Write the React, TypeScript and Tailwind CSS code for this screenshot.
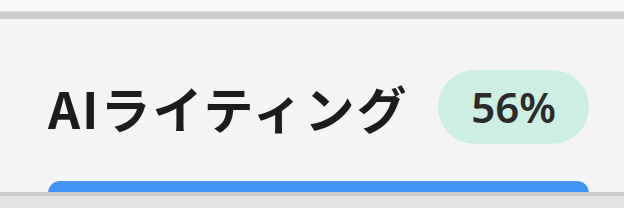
import React from "react";

export default function App() {
  return (
    <div className="w-[624px] h-[208px] bg-[#f9f9f9] flex flex-col overflow-hidden">
      <div className="h-[11px] shrink-0" />
      <div className="h-px bg-[#e0e0e0] shrink-0" />
      <div className="h-[7px] bg-[#cccccc] shrink-0" />
      <div className="h-[173px] shrink-0 bg-[#f4f4f4] pl-[48px] pr-[35px] flex flex-col overflow-hidden">
        <div className="mt-[51px] h-[74px] flex items-center">
          <h2
            className="text-[50px] font-bold text-[#1c1c1c] leading-none tracking-[2px]"
            style={{ fontFamily: '"Noto Sans CJK JP", "Noto Sans", sans-serif' }}
          >
            AIライティング
          </h2>
          <span
            className="ml-auto h-[74px] px-[33px] rounded-full bg-[#cdeee2] text-[#2b2b2b] text-[42px] font-semibold flex items-center leading-none"
            style={{ fontFamily: '"Noto Sans", sans-serif' }}
          >
            56%
          </span>
        </div>
        <div className="mt-[37px] h-[24px] shrink-0 rounded-[12px] bg-[#4295f5]" />
      </div>
      <div className="h-[4px] bg-[#cccccc] shrink-0" />
      <div className="flex-1 bg-[#e3e3e3]" />
    </div>
  );
}
